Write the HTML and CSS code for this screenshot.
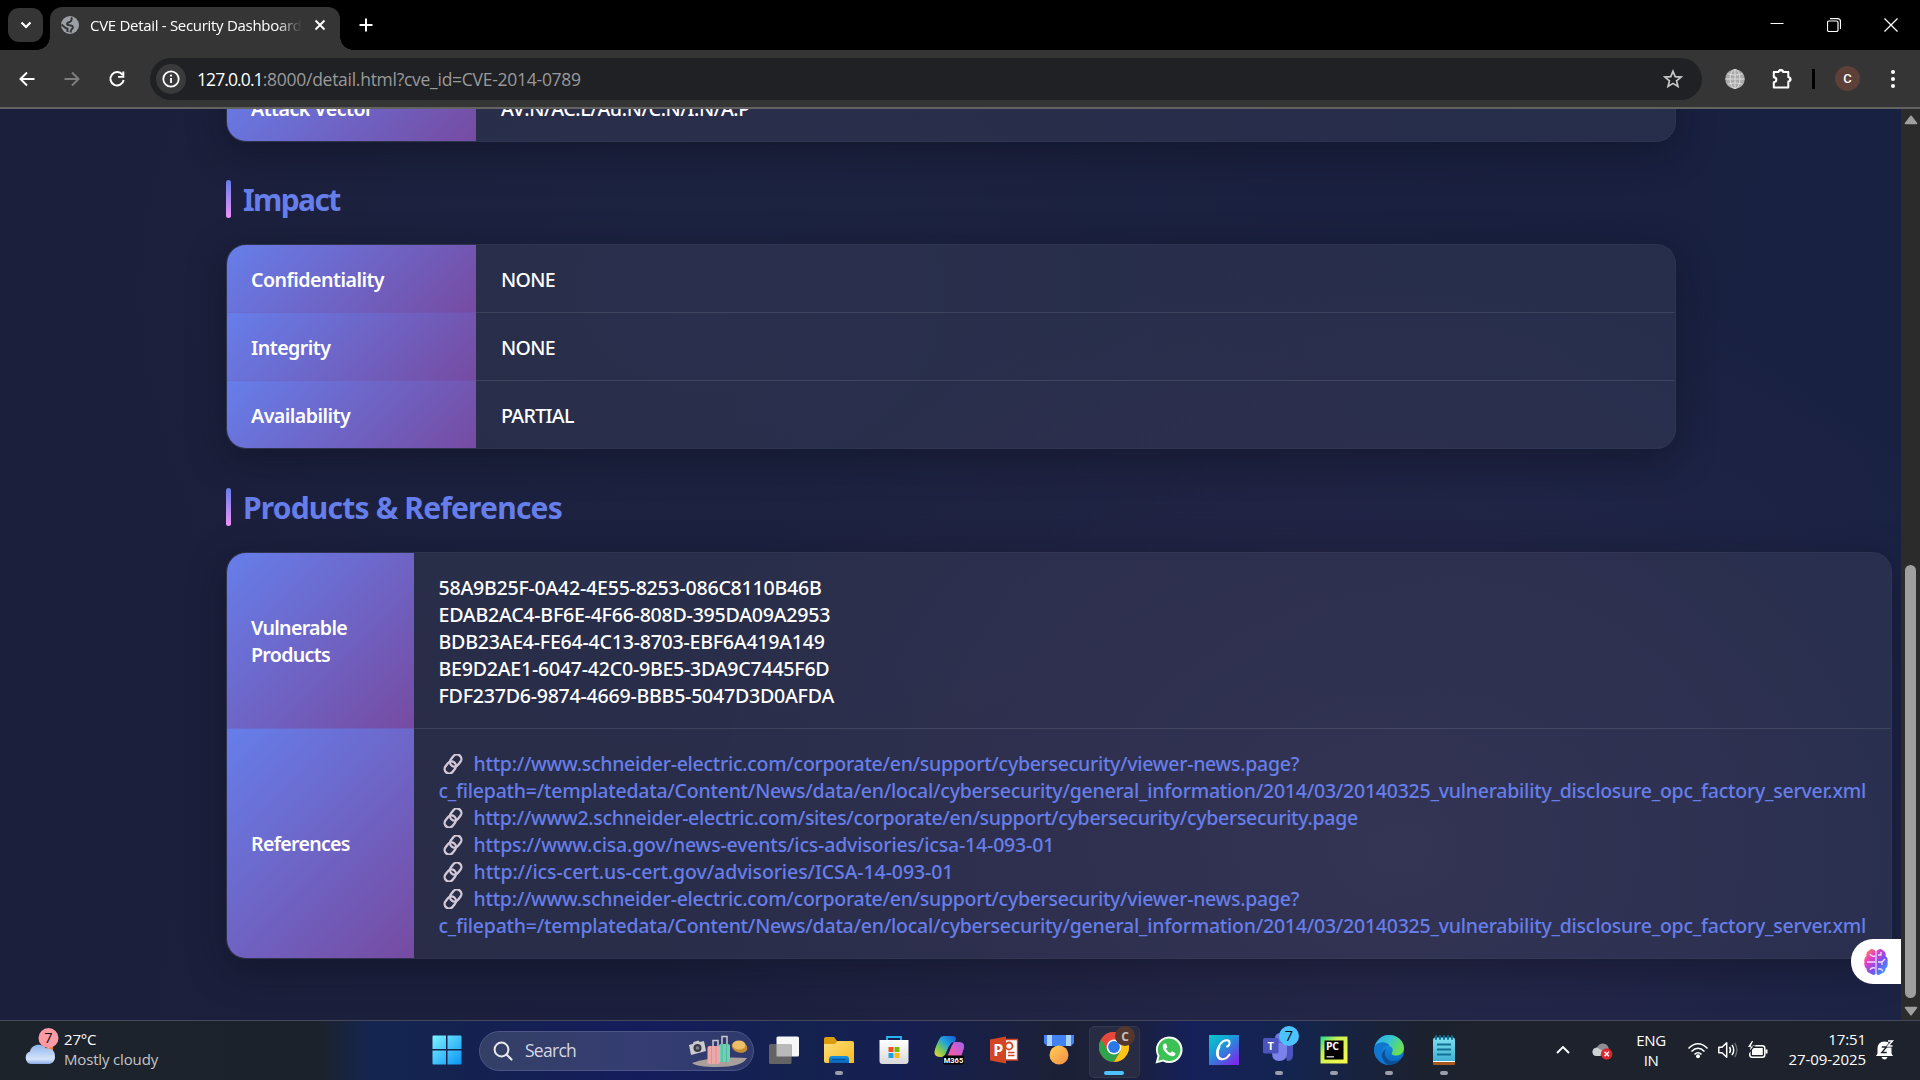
FILE: index.html
```html
<!DOCTYPE html>
<html lang="en">
<head>
<meta charset="utf-8">
<title>CVE Detail - Security Dashboard</title>
<link rel="stylesheet" href="styles.css">
</head>
<body>
<svg class="defs" width="0" height="0" aria-hidden="true">
  <defs>
    <linearGradient id="win" x1="0" y1="0" x2="1" y2="1"><stop offset="0" stop-color="#7df4ff"/><stop offset="1" stop-color="#0a93f5"/></linearGradient>
    <linearGradient id="cloud" x1="0" y1="0" x2="0" y2="1"><stop offset="0" stop-color="#8fb4ee"/><stop offset=".75" stop-color="#d6e4fb"/><stop offset="1" stop-color="#8aaae6"/></linearGradient>
    <linearGradient id="folder" x1="0" y1="0" x2="1" y2="1"><stop offset="0" stop-color="#ffe07a"/><stop offset="1" stop-color="#f9b81f"/></linearGradient>
    <linearGradient id="blueTab" x1="0" y1="0" x2="0" y2="1"><stop offset="0" stop-color="#1793e6"/><stop offset="1" stop-color="#0b62b5"/></linearGradient>
    <linearGradient id="bag" x1="0" y1="0" x2="0" y2="1"><stop offset="0" stop-color="#fff"/><stop offset="1" stop-color="#d9d9db"/></linearGradient>
    <linearGradient id="copA" x1="1" y1="0" x2="0" y2="1"><stop offset="0" stop-color="#1557d6"/><stop offset=".4" stop-color="#22a3dd"/><stop offset=".7" stop-color="#7ecb52"/><stop offset="1" stop-color="#ffd43a"/></linearGradient>
    <linearGradient id="copB" x1="1" y1="0" x2="0" y2="1"><stop offset="0" stop-color="#a060f4"/><stop offset=".5" stop-color="#e75bb5"/><stop offset="1" stop-color="#ff7b47"/></linearGradient>
    <linearGradient id="medal" x1="0" y1="0" x2="1" y2="1"><stop offset="0" stop-color="#ffd257"/><stop offset="1" stop-color="#f58b45"/></linearGradient>
    <linearGradient id="canva" x1="0" y1="0" x2=".8" y2="1"><stop offset="0" stop-color="#0cc8c9"/><stop offset=".4" stop-color="#169fd8"/><stop offset="1" stop-color="#7a2aea"/></linearGradient>
    <linearGradient id="pych" x1="0" y1="0" x2="1" y2="1"><stop offset="0" stop-color="#22d88f"/><stop offset=".35" stop-color="#c9f252"/><stop offset="1" stop-color="#fcf84a"/></linearGradient>
    <linearGradient id="edgeA" x1="0" y1="0" x2="1" y2=".5"><stop offset="0" stop-color="#2fa6e6"/><stop offset=".5" stop-color="#35c6cf"/><stop offset="1" stop-color="#6be04f"/></linearGradient>
    <linearGradient id="edgeB" x1="0" y1="0" x2="0" y2="1"><stop offset="0" stop-color="#1b9de6"/><stop offset="1" stop-color="#0a62c0"/></linearGradient>
    <linearGradient id="brain" x1="0" y1="0" x2="1" y2="1"><stop offset="0" stop-color="#ff9a3c"/><stop offset=".3" stop-color="#e83ec0"/><stop offset=".6" stop-color="#7a50f0"/><stop offset="1" stop-color="#1fb4ff"/></linearGradient>
    <linearGradient id="note" x1="0" y1="0" x2="0" y2="1"><stop offset="0" stop-color="#7fe0f0"/><stop offset="1" stop-color="#3fb0d2"/></linearGradient>
    <symbol id="chain" viewBox="0 0 20 20">
      <g fill="none" stroke="#d3c8d8" stroke-width="2.300" transform="rotate(-52 10 10)">
        <rect x="-.8" y="5.500" width="12.800" height="9" rx="4.500"/>
        <rect x="8" y="5.500" width="12.800" height="9" rx="4.500"/>
      </g>
    </symbol>
  </defs>
</svg>

<header class="browser">
  <div class="tabstrip">
    <button class="tab-search"><svg width="12" height="12" viewBox="0 0 12 12"><path d="M1.500 3.500 6 8l4.500-4.500" fill="none" stroke="#fff" stroke-width="2.200"/></svg></button>
    <div class="tab">
      <svg class="favicon" width="20" height="20" viewBox="0 0 20 20"><circle cx="10" cy="10" r="9" fill="#9aa0a6"/><path d="M12 2.500c-1 1.500.5 2.500-1.500 4-1.500 1-3.500.5-3.500 2.500 0 1.500 2.500 1 4 1.500 2 .5 2.500 2.500 1 3.500s-1 2-1.500 3.500M1.500 9.500l4 3.500 2 .8V17" fill="none" stroke="#353535" stroke-width="2"/></svg>
      <span class="tab-title">CVE Detail - Security Dashboard</span>
      <svg class="tab-close" width="12" height="12" viewBox="0 0 12 12"><path d="m1.500 1.500 9 9m0-9-9 9" stroke="#fff" stroke-width="1.900"/></svg>
    </div>
    <svg class="new-tab" width="14" height="14" viewBox="0 0 14 14"><path d="M7 .5v13M.5 7h13" stroke="#fff" stroke-width="2"/></svg>
    <div class="window-controls">
      <svg width="14" height="14" viewBox="0 0 14 14"><path d="M.5 5.500h13" stroke="#fff" stroke-width="1"/></svg>
      <svg width="14" height="14" viewBox="0 0 14 14"><rect x=".5" y="3" width="10.500" height="10.500" rx="1.500" fill="none" stroke="#fff" stroke-width="1.200"/><path d="M3 .7h7.500q3 0 3 3V11" fill="none" stroke="#fff" stroke-width="1.200"/></svg>
      <svg width="14" height="14" viewBox="0 0 14 14"><path d="m.5.5 13 13m0-13-13 13" stroke="#fff" stroke-width="1.300"/></svg>
    </div>
  </div>
  <div class="toolbar">
    <svg class="nav" width="20" height="20" viewBox="0 0 20 20"><path d="M17.500 10H4M10 3.500 3.500 10l6.500 6.500" fill="none" stroke="#fff" stroke-width="2"/></svg>
    <svg class="nav" width="20" height="20" viewBox="0 0 20 20"><path d="M2.500 10H16M10 3.500l6.500 6.500-6.500 6.500" fill="none" stroke="#7d7d7d" stroke-width="2"/></svg>
    <svg class="nav" width="20" height="20" viewBox="0 0 20 20"><path d="M15.500 5.800A6.700 6.700 0 1 0 16.700 11" fill="none" stroke="#fff" stroke-width="2"/><path d="M17.300 2.500v6.300H11V6.900h4.300V2.500z" fill="#fff"/></svg>
    <div class="omnibox">
      <span class="site-info"><svg width="18" height="18" viewBox="0 0 18 18"><circle cx="9" cy="9" r="7.700" fill="none" stroke="#fff" stroke-width="1.800"/><path d="M9 8v5" stroke="#fff" stroke-width="1.800"/><circle cx="9" cy="5.600" r="1.100" fill="#fff"/></svg></span>
      <span class="url"><b>127.0.0.1</b>:8000/detail.html?cve_id=CVE-2014-0789</span>
      <svg class="star" width="20" height="20" viewBox="0 0 20 20"><path d="m10 2.200 2.200 5.400 5.800.45-4.450 3.750 1.400 5.700L10 14.400l-4.950 3.100 1.400-5.700L2 8.050l5.800-.45z" fill="none" stroke="#c7c7c7" stroke-width="1.700"/></svg>
    </div>
    <div class="actions">
      <svg width="20" height="20" viewBox="0 0 20 20"><circle cx="10" cy="10" r="9.800" fill="#a9a9a9"/><g fill="none" stroke="#e2e2e2" stroke-width=".9"><path d="M10 0v20M.5 10h19M2.500 4.800q7.500 3 15 0M2.500 15.200q7.500-3 15 0"/><ellipse cx="10" cy="10" rx="5" ry="9.600"/></g></svg>
      <svg class="puzzle" width="22" height="22" viewBox="0 0 22 22"><path d="M2.800 4h4.700c0-2.600 4.600-2.600 4.600 0h5.200v5.200c2.900 0 2.900 4.300 0 4.300v6H2.800v-5.300c3.400-.4 3.400-4.500 0-4.900z" fill="none" stroke="#fff" stroke-width="2" stroke-linejoin="round"/><path d="M7.500 3.500c0-3 4.600-3 4.600 0zM18 9.200c3.200 0 3.200 4.300 0 4.300z" fill="#fff"/></svg>
      <i class="divider"></i>
      <span class="avatar">C</span>
      <svg class="menu" width="6" height="20" viewBox="0 0 6 20"><g fill="#fff"><circle cx="3" cy="3" r="2"/><circle cx="3" cy="10" r="2"/><circle cx="3" cy="17" r="2"/></g></svg>
    </div>
  </div>
</header>

<div class="viewport">
  <main class="page">
    <table class="detail">
      <tr><th>Attack Vector</th><td class="vector">AV:N/AC:L/Au:N/C:N/I:N/A:P</td></tr>
    </table>

    <h2 class="impact">Impact</h2>
    <table class="detail">
      <tr><th>Confidentiality</th><td>NONE</td></tr>
      <tr><th>Integrity</th><td>NONE</td></tr>
      <tr><th>Availability</th><td>PARTIAL</td></tr>
    </table>

    <h2>Products &amp; References</h2>
    <table class="detail wide">
      <tr><th>Vulnerable Products</th><td>58A9B25F-0A42-4E55-8253-086C8110B46B<br>EDAB2AC4-BF6E-4F66-808D-395DA09A2953<br>BDB23AE4-FE64-4C13-8703-EBF6A419A149<br>BE9D2AE1-6047-42C0-9BE5-3DA9C7445F6D<br>FDF237D6-9874-4669-BBB5-5047D3D0AFDA</td></tr>
      <tr><th>References</th><td class="links">
        <a><svg class="chain"><use href="#chain"/></svg><span class="news">http://www.schneider-electric.com/corporate/en/support/cybersecurity/viewer-news.page?</span><br>c_filepath=/templatedata/Content/News/data/en/local/cybersecurity/general_information/2014/03/20140325_vulnerability_disclosure_opc_factory_server.xml</a>
        <a class="sites"><svg class="chain"><use href="#chain"/></svg>http://www2.schneider-electric.com/sites/corporate/en/support/cybersecurity/cybersecurity.page</a>
        <a class="cisa"><svg class="chain"><use href="#chain"/></svg>https://www.cisa.gov/news-events/ics-advisories/icsa-14-093-01</a>
        <a class="cert"><svg class="chain"><use href="#chain"/></svg>http://ics-cert.us-cert.gov/advisories/ICSA-14-093-01</a>
        <a><svg class="chain"><use href="#chain"/></svg><span class="news">http://www.schneider-electric.com/corporate/en/support/cybersecurity/viewer-news.page?</span><br>c_filepath=/templatedata/Content/News/data/en/local/cybersecurity/general_information/2014/03/20140325_vulnerability_disclosure_opc_factory_server.xml</a>
      </td></tr>
    </table>
    <button class="assistant"><svg width="24" height="28" viewBox="0 0 24 28"><path d="M11.500 3Q8-.5 5 2.500 1.500 4 2.500 8-.5 10 .5 14q-1 4 2 6.500 0 4 4 5 3 2.500 5 .5zM12.500 3Q16-.5 19 2.500q3.500 1.500 2.500 5.500 3 2 2 6 1 4-2 6.500 0 4-4 5-3 2.500-5 .5z" fill="url(#brain)"/><path d="M3 14h8.500M11 8Q7 9 6 6M11 20q-4-1-5 2M14 14h4l3-3M14 7h3V4M18 14v3M14 21h3l2 2" fill="none" stroke="#f4dcff" stroke-width="1.300"/></svg></button>
  </main>
  <aside class="scrollbar">
    <svg width="14" height="10" viewBox="0 0 14 10"><path d="M6.300.8.8 8q-.4 1.300.8 1.300h10.800q1.200 0 .8-1.300L7.700.8q-.7-.7-1.400 0z" fill="#9f9f9f"/></svg>
    <i class="thumb"></i>
    <svg width="14" height="10" viewBox="0 0 14 10"><path d="M6.300 9.200.8 2Q.4.700 1.600.700h10.800q1.200 0 .8 1.300L7.700 9.200q-.7.7-1.400 0z" fill="#9f9f9f"/></svg>
  </aside>
</div>

<footer class="taskbar">
  <div class="weather">
    <svg width="36" height="40" viewBox="0 0 36 40"><path d="M18 24h11v-8z" fill="#f57c1c"/><path d="M7 37a6.500 6.500 0 0 1-1-12.500C7 17.500 18 15 22 21.500c6-1 9 3 9 8 0 5-3 7.500-7 7.500z" fill="url(#cloud)"/><circle cx="24.500" cy="11" r="10" fill="#ff99a4"/><text x="24.500" y="16" text-anchor="middle" class="badge-text">7</text></svg>
    <p>27°C<br><span>Mostly cloudy</span></p>
  </div>
  <div class="slot"><svg width="30" height="30" viewBox="0 0 30 30"><path d="M.5 1.500q0-1 1-1H14V14H.5zM15.500.5h13q1 0 1 1V14h-14zM.5 15.500H14V29.500H1.500q-1 0-1-1zM15.500 15.500h14v13q0 1-1 1h-13z" fill="url(#win)"/></svg></div>
  <div class="search">
    <svg width="20" height="20" viewBox="0 0 20 20"><circle cx="8.500" cy="8.500" r="6.900" fill="none" stroke="#e8e8ee" stroke-width="2"/><path d="m13.500 13.500 5 5" stroke="#e8e8ee" stroke-width="2.200" stroke-linecap="round"/></svg>
    <span>Search</span>
    <svg class="travel" width="60" height="34" viewBox="0 0 60 34"><path d="M4 29q20-7 55-5-5 9-30 9-20 0-25-4z" fill="#a9a09d"/><path d="m1 11 4-1.200.5-1.800 5-1.400 1.200 1.300L16 7l2 10-15 4z" fill="#c9cbd1"/><circle cx="9.500" cy="14" r="4" fill="#3a3b42"/><circle cx="9.500" cy="14" r="1.800" fill="#7f828c"/><path d="M25 14V6.500h5V14M34 11V2.500h5V11" fill="none" stroke="#c9c9d2" stroke-width="1.500"/><rect x="31" y="10" width="11" height="18" rx="2" fill="#6fd0b6"/><path d="M34 10v18M38.500 10v18" stroke="#4bb096" stroke-width=".8"/><rect x="19.500" y="12" width="12.500" height="18" rx="2" fill="#eda9a9"/><path d="M23.500 12v18M28 12v18" stroke="#d68d8d" stroke-width=".8"/><ellipse cx="51.500" cy="13" rx="8" ry="5.500" transform="rotate(18 51.500 13)" fill="#c98d35"/><ellipse cx="51" cy="11" rx="6.500" ry="4.500" fill="#edbf68"/></svg>
  </div>
  <div class="apps">
    <div class="slot"><svg width="30" height="30" viewBox="0 0 30 30"><rect x="7.500" y="1.500" width="22.500" height="20" rx="1.500" fill="#f7f7f7"/><rect x="0" y="9" width="22.500" height="20" rx="1.500" fill="#646464"/><path d="M7.500 9h15v12.500h-15z" fill="#b9b9b9"/></svg></div>
    <div class="slot run"><svg width="30" height="30" viewBox="0 0 30 30"><path d="M0 4q0-2 2-2h8l3 4h15v8H0z" fill="#dc9c0c"/><path d="M0 9h11l2.500-3H28q2 0 2 2v20H2q-2 0-2-2z" fill="url(#folder)"/><path d="M5 28v-4q0-3 3-3h14q3 0 3 3v4z" fill="url(#blueTab)"/><path d="M8 24.500h13.500" stroke="#0a4f95" stroke-width="1.200"/></svg></div>
    <div class="slot"><svg width="30" height="30" viewBox="0 0 30 30"><path d="M8 6V2h14v4" fill="none" stroke="#29b4f0" stroke-width="1.800"/><path d="M.5 5h29v21q0 3-3 3h-23q-3 0-3-3z" fill="url(#bag)"/><path d="M9.500 12H14.500v5h-5z" fill="#f05125"/><path d="M15.500 12h5v5h-5z" fill="#7fba00"/><path d="M9.500 18h5v5h-5z" fill="#1ba0e6"/><path d="M15.500 18h5v5h-5z" fill="#fdb813"/></svg></div>
    <div class="slot"><svg width="30" height="30" viewBox="0 0 30 30"><path d="M6 3Q7 1 10 1h9q3 0 3 3l-2 4q-3 0-5 3l-4 9q-1 2-4 2-7 0-6.500-5Q1 12 6 3z" fill="url(#copA)"/><path d="M19 7h6q6 0 5 6l-4 12q-1 3-5 3h-7l-4-3q2 0 3-3l5-13q1-2 1-2z" fill="url(#copB)"/><path d="M12.500 20q1.500-6 4-11 1-2 3.500-2l-2.500 4-3.500 9z" fill="#141f58"/><rect x="9" y="20.500" width="21" height="9" rx="2" fill="#000"/><text x="19.500" y="27.800" text-anchor="middle" class="m365">M365</text></svg></div>
    <div class="slot"><svg width="30" height="30" viewBox="0 0 30 30"><path d="M14 4.500h14.500v20.500H14z" fill="#fff" stroke="#d24625" stroke-width="1.300"/><circle cx="20" cy="11" r="3.500" fill="none" stroke="#d24625" stroke-width="1.800"/><path d="M19 17.500h6.500M19 20.500h6.500" stroke="#d24625" stroke-width="1.400"/><path d="M1 4.500 17 1.500v27L1 25.500z" fill="#d24625"/><text x="9.200" y="20.500" text-anchor="middle" class="ppt">P</text></svg></div>
    <div class="slot"><svg width="30" height="30" viewBox="0 0 30 30"><path d="M0 0h30v8l-3 3H3L0 8z" fill="#4382f5"/><path d="M3 0h5v11H3zM22 0h5v11h-5z" fill="#a9d2ff"/><circle cx="15" cy="20" r="9.500" fill="url(#medal)"/></svg></div>
    <div class="slot active"><svg width="36" height="40" viewBox="0 0 36 40"><g transform="translate(0 6)"><circle cx="15" cy="15" r="15" fill="#e8483b"/><path d="M2 7.500A15 15 0 0 0 15 30l6.500-11L15 15z" fill="#2fa24c"/><path d="M15 30A15 15 0 0 0 28 7.500H15L21.500 19z" fill="#fbc516"/><path d="M15 8h13.200A15 15 0 0 0 2 7.500L8.500 18z" fill="#e8483b"/><circle cx="15" cy="15" r="7.400" fill="#fff"/><circle cx="15" cy="15" r="5.900" fill="#2b78e9"/></g><circle cx="26" cy="10" r="10" fill="#54382f"/><text x="26" y="14.500" text-anchor="middle" class="profile">C</text></svg></div>
    <div class="slot"><svg width="28" height="28" viewBox="0 0 28 28"><path d="M.5 27.500 2.500 20A13.300 13.300 0 1 1 8 25.500z" fill="#f6fff6"/><path d="m3.200 24.800 1.300-5A11.300 11.300 0 1 1 8.300 23.500z" fill="#3cc254"/><path d="M9.800 7.500c-1 0-2 1.200-2 3 0 4.500 6 9.700 9.500 9.700 2 0 3.200-1.200 3.200-3l-3.500-2-1.800 1.800c-2-.8-3.300-2.300-4.200-4.200l1.400-1.600-1.200-3.400z" fill="#fff"/></svg></div>
    <div class="slot"><svg width="30" height="30" viewBox="0 0 30 30"><path d="M0 0h30v30H0z" fill="url(#canva)"/><path d="M18 11.500c2.500-.5 4-5.500.5-6.200C13 4.500 8 12 8 18c0 8.500 9 7.500 12.500 1.500" fill="none" stroke="#fff" stroke-width="2" stroke-linecap="round"/><path d="M10.500 11C7 17 8.500 24 12.500 24" fill="none" stroke="#fff" stroke-width="2.500"/></svg></div>
    <div class="slot run"><svg class="teams-icon" width="38" height="40" viewBox="0 0 38 40"><circle cx="18" cy="12" r="5" fill="#6d75e0"/><path d="M20 17h11v12q0 6-6 6z" fill="#4b53bc"/><path d="M10 17h15v10q0 8-8 8-7 0-7-8z" fill="#7b83eb"/><rect x="1" y="12" width="15.500" height="15.500" rx="1.500" fill="#4b53bc"/><text x="8.800" y="24" text-anchor="middle" class="teams">T</text><circle cx="27" cy="10" r="10" fill="#4cc2ff"/><text x="27" y="15" text-anchor="middle" class="badge-text">7</text></svg></div>
    <div class="slot run"><svg width="28" height="28" viewBox="0 0 28 28"><path d="M.5.500h27v27H.5z" fill="url(#pych)"/><path d="M4.500 4.500h19v19h-19z" fill="#000"/><text x="6" y="14" class="pc">PC</text><path d="M6.500 20.800H14" stroke="#ccc" stroke-width="1.400"/></svg></div>
    <div class="slot run"><svg width="30" height="30" viewBox="0 0 30 30"><circle cx="15" cy="15" r="15" fill="url(#edgeB)"/><path d="M1 11C4 3 10 0 15 0c9 0 15 6.500 15 13 0 5-4 7.500-8 7.500-3 0-5-1-4-3 2-3 0-6.500-4-6.500-5 0-9 4-9 9C2 17 1 14 1 11z" fill="url(#edgeA)"/><path d="M12 14c-4 6 2 14 10 12 2-.5 4-1.500 5-3-3 5-8 7-13 7-6-2-9-12-2-16z" fill="#0c4f93"/><path d="M1 11c3-5 13-5 14.500 0C9 11 6 16 8 22 9 26 12 29 15 30 6 30-1 21 1 11z" fill="#1176cf"/></svg></div>
    <div class="slot run"><svg width="24" height="30" viewBox="0 0 24 30"><path d="M1 25h22v4q0 1-1 1H2q-1 0-1-1z" fill="#a8591f"/><path d="M1 25h22v2H1z" fill="#fff"/><path d="M1 5q0-2.500 2-2.500h18q2 0 2 2.500v21H1z" fill="url(#note)"/><path d="M4 1v3M8 1v3M12 1v3M16 1v3M20 1v3" stroke="#0e6f95" stroke-width="2" stroke-linecap="round"/><path d="M5 9.500h14M5 14.500h14M5 19.500h14" stroke="#126e93" stroke-width="1.800"/></svg></div>
  </div>
  <div class="tray">
    <span class="cell"><svg width="14" height="8" viewBox="0 0 14 8"><path d="m1 7 6-6 6 6" fill="none" stroke="#fff" stroke-width="1.900"/></svg></span>
    <span class="cell"><svg width="22" height="20" viewBox="0 0 22 20"><path d="M5 16Q.5 16 .5 11.500 1 8 5 7.500 7 3.500 11 3.500q5 0 6 6v6.500z" fill="#8d8f94"/><path d="M5 16Q.5 16 .5 11.500 1 8 5 7.500l5 3-2 5.500z" fill="#d0d1d4"/><circle cx="14.700" cy="14" r="5.700" fill="#e0262c"/><path d="m12.500 11.800 4.400 4.400m0-4.400-4.400 4.400" stroke="#fff" stroke-width="1.500"/></svg></span>
    <span class="lang">ENG<br>IN</span>
    <span class="status"><svg width="22" height="18" viewBox="0 0 22 18"><g fill="none" stroke="#fff" stroke-width="1.600"><path d="M1.500 7.500q9.500-9.500 19 0M4.500 10.500q6.500-6.500 13 0M7.500 13.500q3.500-3.500 7 0"/></g><circle cx="11" cy="15.300" r="2" fill="#fff"/></svg></span>
    <span class="status"><svg width="22" height="18" viewBox="0 0 22 18"><path d="M1.800 6.200H5l4.700-4.400v14.400L5 11.800H1.800z" fill="none" stroke="#fff" stroke-width="1.500" stroke-linejoin="round"/><path d="M12.500 6q2 3 0 6M15 3.800q3.500 5.200 0 10.400" fill="none" stroke="#fff" stroke-width="1.500"/><path d="M17.700 2q4.500 7 0 14" fill="none" stroke="#656970" stroke-width="1.400"/></svg></span>
    <span class="status"><svg width="22" height="18" viewBox="0 0 22 18"><rect x="2.800" y="4.700" width="15" height="11.500" rx="2.500" fill="none" stroke="#fff" stroke-width="1.500"/><path d="M5 7h10.800v7H5z" fill="#fff"/><path d="M18.500 8.500h2v4h-2z" fill="#fff"/><path d="M4.500-.5 0 6.500h3L1.500 12 7.500 5H4.500L7-.5z" fill="#fff" stroke="#1e222c" stroke-width="1.200"/></svg></span>
    <span class="clock">17:51<br>27-09-2025</span>
    <svg class="bell" width="20" height="20" viewBox="0 0 20 20"><path d="M2.500 13.500V9q0-7.500 7-7.500t7 7.500v4.500l1.500 2.500H1z" fill="#fff"/><path d="M6.500 17h6q-1 2.500-3 2.500t-3-2.500z" fill="#fff"/><path d="M13 .8h4.500L13 6h4.500" fill="none" stroke="#1e222c" stroke-width="2.800"/><path d="M6.800 7h4.700l-4.700 5.500h5" fill="none" stroke="#1e222c" stroke-width="1.400"/><path d="M13 1h4.500L13 6h4.500" fill="none" stroke="#fff" stroke-width="1.400"/></svg>
  </div>
</footer>
</body>
</html>
```
FILE: styles.css
```css
* { box-sizing: border-box; }

body {
  margin: 0;
  width: 1920px;
  height: 1080px;
  overflow: hidden;
  display: flex;
  flex-direction: column;
  background: #000;
  color: #fff;
  font-family: "Open Sans", "Noto Sans", sans-serif;
}

svg { display: block; flex: none; }
button { border: 0; padding: 0; font: inherit; }
.defs { position: absolute; }

/* Browser chrome */
.browser { height: 109px; background: #353535; border-bottom: 2px solid #626361; }
.tabstrip {
  height: 50px;
  padding: 8px 22px 0 8px;
  display: flex;
  align-items: flex-start;
  background: #000;
}
.tab-search {
  width: 35px; height: 34px;
  border-radius: 11px;
  background: #353535;
  display: grid;
  place-items: center;
}
.tab {
  position: relative;
  width: 290px; height: 43px;
  margin: -1px 0 0 7px;
  padding: 0 14px 7px 10px;
  border-radius: 12px 12px 0 0;
  background: #353535;
  display: flex;
  align-items: center;
}
.tab::before, .tab::after {
  content: "";
  position: absolute;
  bottom: 0;
  width: 13px; height: 13px;
}
.tab::before { left: -13px; background: radial-gradient(circle at 0 0, transparent 12.500px, #353535 13px); }
.tab::after { right: -13px; background: radial-gradient(circle at 100% 0, transparent 12.500px, #353535 13px); }
.tab-title {
  width: 212px;
  margin-left: 10px;
  overflow: hidden;
  white-space: nowrap;
  font-size: 15px;
  letter-spacing: -.3px;
  -webkit-mask-image: linear-gradient(90deg, #000 88%, transparent 100%);
  mask-image: linear-gradient(90deg, #000 88%, transparent 100%);
}
.tab-close { margin-left: auto; }
.new-tab { margin: 10px 0 0 19px; }
.window-controls { margin: 10px 0 0 auto; display: flex; gap: 43px; }

.toolbar {
  height: 57px;
  padding: 0 24px 0 17px;
  display: flex;
  align-items: center;
  background: #353535;
}
.nav { margin-right: 25px; }
.omnibox {
  width: 1552px; height: 42px;
  margin-left: -2px;
  padding: 0 19px 0 6px;
  border-radius: 21px;
  background: #202124;
  display: flex;
  align-items: center;
}
.site-info {
  width: 30px; height: 30px;
  border-radius: 50%;
  background: #3a3a3c;
  display: grid;
  place-items: center;
}
.url { margin-left: 11px; font-size: 17.500px; letter-spacing: -.27px; color: #9a9a9a; }
.url b { font-weight: 400; letter-spacing: -.9px; color: #fff; }
.star { margin-left: auto; }
.actions { flex: 1; display: flex; align-items: center; margin-left: 23px; }
.puzzle { margin-left: 26px; }
.divider { width: 3px; height: 20px; margin-left: 19px; background: #000; }
.avatar {
  width: 25px; height: 25px;
  margin-left: 20px;
  border-radius: 50%;
  background: #5d4037;
  font: 500 13px/25px Roboto, sans-serif;
  text-align: center;
}
.menu { margin-left: auto; }

/* Page */
.viewport { height: 911px; display: flex; }
.page {
  position: relative;
  width: 1901px;
  padding: 0 0 61px 226px;
  overflow: hidden;
  display: flex;
  flex-direction: column;
  justify-content: flex-end;
  background:
    radial-gradient(ellipse 750px 600px at 1400px 740px, rgba(110, 75, 125, .17), transparent),
    radial-gradient(ellipse 600px 500px at 700px 180px, rgba(34, 50, 84, .18), transparent),
    linear-gradient(100deg, #1b1f3b 0%, #1b203e 50%, #182142 100%);
}
h2 {
  position: relative;
  height: 37.500px;
  margin: 39px 0 26.500px;
  padding-left: 17px;
  flex: none;
  font-family: "Noto Sans", sans-serif;
  font-size: 30px;
  font-weight: 700;
  line-height: 40px;
  letter-spacing: -.82px;
  color: #667eea;
}
h2.impact { margin-top: 38px; letter-spacing: -1.600px; }
h2::before {
  content: "";
  position: absolute;
  left: 0; top: 0; bottom: 0;
  width: 5px;
  border-radius: 3px;
  background: linear-gradient(#667eea, #f093fb);
}
.detail {
  width: 1450px;
  flex: none;
  table-layout: fixed;
  border: 1px solid rgba(255, 255, 255, .03);
  border-radius: 20px;
  border-spacing: 0;
  overflow: hidden;
  background: rgba(255, 255, 255, .06);
  box-shadow: 0 10px 38px rgba(10, 12, 24, .42);
  font-family: "Noto Sans", sans-serif;
}
.detail.wide { width: 1666px; }
.detail th, .detail td {
  padding: 21px 24px 19px;
  border-bottom: 1px solid rgba(255, 255, 255, .1);
  font-size: 19.600px;
  line-height: 27px;
  text-align: left;
  vertical-align: middle;
}
.detail tr:last-child > * { border-bottom: 0; }
.detail th {
  width: 249px;
  font-weight: 600;
  letter-spacing: -.52px;
  background: linear-gradient(135deg, #667eea, #764ba2);
  border-bottom-color: rgba(118, 75, 162, .35);
}
.detail.wide th { width: 187px; padding-top: 20px; padding-bottom: 20px; letter-spacing: -.7px; }
.detail td { padding-left: 25px; white-space: nowrap; font-weight: 500; letter-spacing: -.68px; }
.detail .vector { letter-spacing: -.4px; }
.detail.wide td { padding-left: 24.500px; letter-spacing: -.25px; }
.detail.wide .links { font-size: 19.500px; letter-spacing: -.235px; color: #667eea; }
.links a { display: block; }
.links .news { letter-spacing: -.28px; }
.links .sites { letter-spacing: -.29px; }
.links .cisa { letter-spacing: -.17px; }
.links .cert { letter-spacing: -.09px; }
.chain { display: inline-block; width: 20px; height: 20px; margin: 0 11px 0 4px; vertical-align: -3px; }

.assistant {
  position: absolute;
  right: 0; top: 830px;
  width: 50px; height: 45px;
  border-radius: 22px 0 0 22px;
  background: #fff;
  display: grid;
  place-items: center;
}

.scrollbar {
  width: 19px;
  padding: 6px 0 4px;
  background: #2b2b2b;
  display: flex;
  flex-direction: column;
  align-items: center;
}
.thumb { width: 11px; height: 433px; margin: auto 0 8px; border-radius: 6px; background: #9f9f9f; }

/* Taskbar */
.taskbar {
  height: 60px;
  border-top: 1px solid #45485a;
  display: flex;
  align-items: center;
  background: linear-gradient(90deg, #1d232b 0, #1c222c 320px, #142650 370px, #142150 480px, #151c5c 640px, #14224f 800px, #161f52 900px, #1c2036 1060px, #1b203c 1130px, #15205a 1190px, #13244f 1290px, #1c212f 1420px, #1d222c 1500px, #1d222c 100%);
}
.weather { width: 420px; padding-left: 24px; display: flex; align-items: center; }
.weather svg { margin-top: -7px; }
.weather p { margin: -3px 0 0 4px; font-size: 15px; line-height: 20px; letter-spacing: -.16px; }
.weather span { color: #c3c5c8; }
.slot { position: relative; width: 54.950px; height: 50px; display: grid; place-items: center; }
.slot > svg { margin-top: -1px; }
.slot.run::after, .slot.active::after {
  content: "";
  position: absolute;
  left: 50%; bottom: 1px;
  width: 8px; height: 4px;
  margin-left: -4px;
  border-radius: 2px;
  background: #9a9eac;
}
.slot.active::before {
  content: "";
  position: absolute;
  left: 2px; top: 0;
  width: 49px; height: 50px;
  border: 1px solid #34384c;
  border-radius: 5px;
  background: #282c42;
}
.slot.active::after { width: 20px; margin-left: -10px; background: #4cc2ff; }
.slot.active > svg { position: relative; margin: -10px 0 0 5px; }
.slot > .teams-icon { margin: -9px 0 0 4px; }
.search {
  width: 275px; height: 40px;
  margin: 0 3px 0 4px;
  padding: 0 5px 0 13px;
  border: 1px solid #4c5586;
  border-radius: 20px;
  background: linear-gradient(90deg, #343f66, #353d72 60%, #2f396b);
  display: flex;
  align-items: center;
}
.search span { margin: -2px 0 0 12px; font-size: 17.500px; letter-spacing: -.7px; color: #d4d7e3; }
.travel { margin-left: auto; }
.apps { display: flex; }
.badge-text { font: 14.500px "Open Sans", sans-serif; fill: #111; }
.m365 { font: 700 7.500px Roboto, sans-serif; fill: #fff; }
.ppt { font: 700 16px "Open Sans", sans-serif; fill: #fff; }
.profile { font: 700 12px "Open Sans", sans-serif; fill: #c9c0bd; }
.teams { font: 700 11px "Open Sans", sans-serif; fill: #fff; }
.pc { font: 700 10.500px "Open Sans", sans-serif; fill: #fff; letter-spacing: -.4px; }

.tray { margin-left: auto; margin-top: -2px; padding-right: 25px; display: flex; align-items: center; font-size: 15px; line-height: 20px; }
.cell { width: 40px; display: grid; place-items: center; }
.lang { width: 56px; margin-right: 4px; text-align: center; letter-spacing: -.4px; }
.status { width: 30px; display: grid; place-items: center; }
.clock { width: 93px; margin-top: -1px; text-align: right; letter-spacing: -.08px; }
.bell { margin-left: 9px; }
```
